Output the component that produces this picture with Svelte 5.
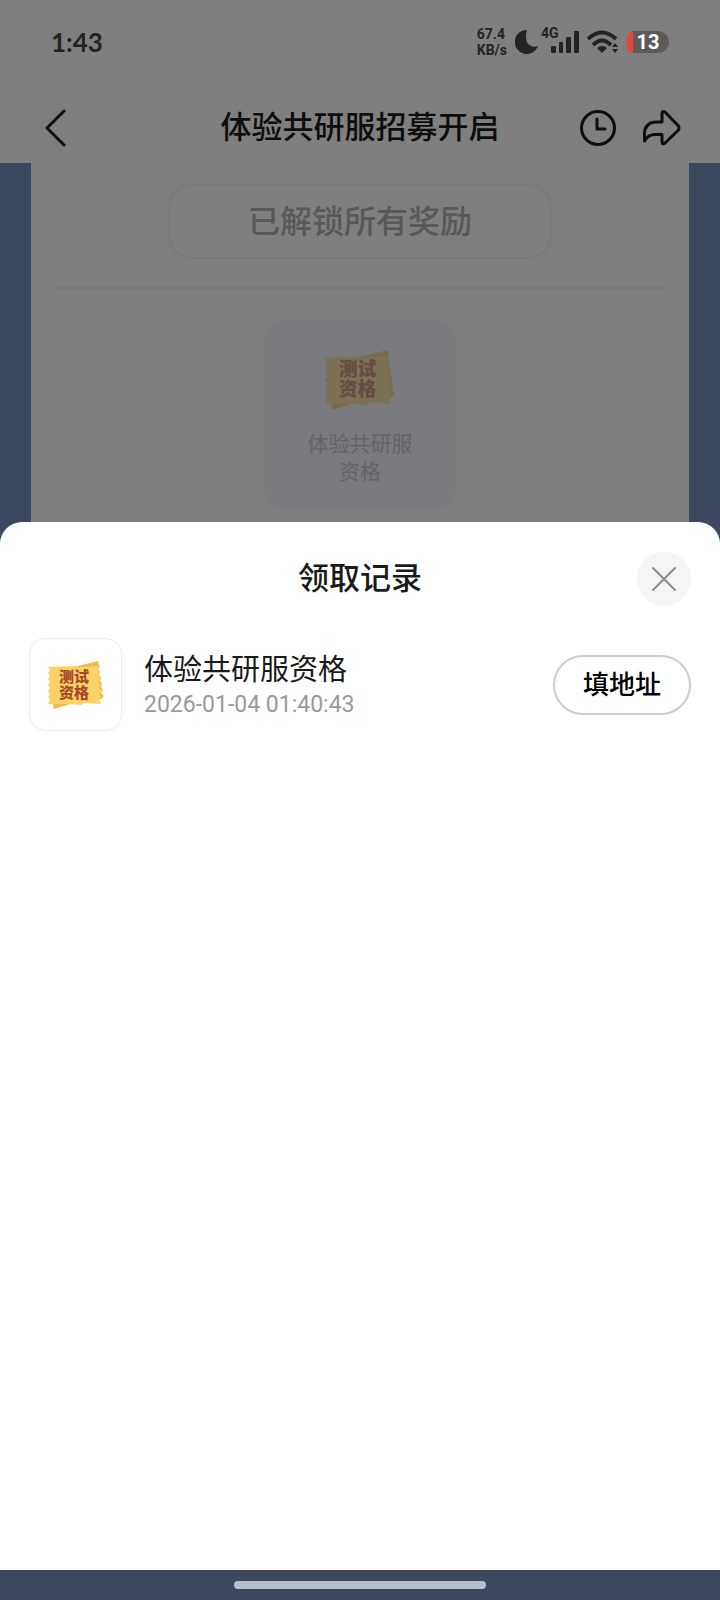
<script lang="ts">
	type RewardRecord = { id: number; name: string; time: string };

	const records: RewardRecord[] = [
		{ id: 1, name: "体验共研服资格", time: "2026-01-04 01:40:43" },
	];

	let open = $state(true);
</script>

{#snippet ticket()}
	<svg class="ticket" viewBox="0 0 56 48" role="img" aria-label="测试资格">
		<path
			d="M1 10 L30 5 L50 0 L51 5 L50 8 L52 11 L51 14 L53 17 L52 20 L54 23 L53 26 L55 29 L53 32 L56 35 L53 38 L22 43 L6 48 L5 43 Z"
			fill="#f1b94b"
		/>
		<path
			d="M0 6 L28 5 L30 6 L52 5 L50 9 L52 12 L50 15 L53 18 L50 21 L53 24 L51 27 L54 30 L51 33 L53 36 L51 39 L53 43 L36 42 L33 44 L20 43 L0 43 L2 39 L0 36 L2 33 L0 30 L2 27 L0 24 L2 21 L0 18 L2 15 L0 12 L2 9 Z"
			fill="#fbd266"
		/>
		<text class="ticket-text"><tspan x="11" y="21">测试</tspan><tspan x="11" y="37">资格</tspan></text>
	</svg>
{/snippet}

<div class="screen">
	<div class="status-bar">
		<span class="clock">1:43</span>
		<div class="status-icons">
			<span class="speed">67.4<br />KB/s</span>
			<svg class="moon" width="24" height="24" viewBox="0 0 24 24" aria-hidden="true">
				<path d="M12 0 A12 12 0 1 0 23 16 C16 19 8 13 12 0 Z" fill="#232323" />
			</svg>
			<div class="signal">
				<span class="network">4G</span>
				<svg width="28" height="24" viewBox="0 0 28 24" aria-hidden="true">
					<g fill="#232323">
						<rect x="0" y="16" width="5" height="7" rx="1" />
						<rect x="8" y="12" width="4" height="11" rx="1" />
						<rect x="15" y="7" width="5" height="16" rx="1" />
						<rect x="23" y="1" width="5" height="22" rx="1" />
					</g>
				</svg>
			</div>
			<svg width="32" height="24" viewBox="0 0 32 24" aria-hidden="true">
				<g fill="none" stroke="#232323" stroke-width="4">
					<path d="M1 9 Q15 -4 29 9" />
					<path d="M6 15 Q15 6 24 15" />
				</g>
				<path d="M10 18 Q15 14 20 18 L15 23 Z" fill="#232323" />
				<path d="M28 13 L31 17 H25 Z M28 23 L31 19 H25 Z" fill="#232323" />
			</svg>
			<div class="battery"><span>13</span></div>
		</div>
	</div>

	<header class="nav">
		<button class="icon-button back" aria-label="返回">
			<svg width="22" height="38" viewBox="0 0 22 38">
				<path d="M19 2 L2 19 L19 36" />
			</svg>
		</button>
		<h1>体验共研服招募开启</h1>
		<div class="nav-actions">
			<button class="icon-button" aria-label="记录">
				<svg width="38" height="38" viewBox="0 0 38 38">
					<circle cx="19" cy="19" r="16.5" />
					<path d="M18 10 V20 H26" />
				</svg>
			</button>
			<button class="icon-button" aria-label="分享">
				<svg width="38" height="38" viewBox="0 0 38 38">
					<path
						d="M19 4.5 Q19 1.5 22 3 L35 16.5 Q37 19 35 21.5 L22 34 Q19 36 19 32.5 V25.5 H12 Q5 25.5 1.5 32 V25 Q1.5 13.5 13 13 H19 Z"
					/>
				</svg>
			</button>
		</div>
	</header>

	<main class="panel">
		<button class="unlocked" disabled>已解锁所有奖励</button>
		<hr />
		<div class="prize">
			{@render ticket()}
			<p>体验共研服资格</p>
		</div>
	</main>

	{#if open}
		<div class="mask">
			<div class="sheet" role="dialog" aria-modal="true" aria-labelledby="sheet-title">
				<div class="sheet-header">
					<h2 id="sheet-title">领取记录</h2>
					<button class="close" aria-label="关闭" onclick={() => (open = false)}>
						<svg width="26" height="26" viewBox="0 0 26 26">
							<path d="M2 2 L24 24 M24 2 L2 24" />
						</svg>
					</button>
				</div>
				<ul>
					{#each records as record (record.id)}
						<li>
							<div class="thumb">{@render ticket()}</div>
							<div class="info">
								<p class="name">{record.name}</p>
								<time>{record.time}</time>
							</div>
							<button class="address">填地址</button>
						</li>
					{/each}
				</ul>
			</div>
			<div class="home-area"><span></span></div>
		</div>
	{/if}
</div>

<style>
	:global(body) {
		background: #7890bc;
	}

	.screen {
		position: relative;
		display: flex;
		flex-direction: column;
		min-height: 100vh;
		font-family: Roboto, "Noto Sans CJK SC", sans-serif;
		color: #1a1a1a;
		background: #7890bc;
	}

	h1,
	h2,
	p,
	ul {
		margin: 0;
		padding: 0;
	}

	h1,
	h2 {
		font-size: 31px;
		font-weight: 500;
	}

	button {
		padding: 0;
		border: none;
		background: none;
		font-family: inherit;
		cursor: pointer;
	}

	svg {
		display: block;
	}

	.status-bar {
		display: flex;
		align-items: center;
		justify-content: space-between;
		box-sizing: border-box;
		height: 91px;
		padding: 0 51px 8px;
		color: #232323;
		background: #fff;
	}

	/* system icons stay above the dimmed page */
	.clock,
	.status-icons {
		position: relative;
		z-index: 2;
	}

	.clock {
		font-family: Lato, sans-serif;
		font-size: 26px;
		font-weight: 700;
	}

	.status-icons {
		display: flex;
		align-items: center;
		gap: 8px;
	}

	.speed {
		font-size: 14px;
		font-weight: 700;
		line-height: 16px;
	}

	.signal {
		position: relative;
		padding-left: 4px;
	}

	.network {
		position: absolute;
		top: -5px;
		left: -6px;
		font-size: 14px;
		font-weight: 700;
		line-height: 16px;
	}

	.battery {
		width: 42px;
		height: 22px;
		border-radius: 7px 11px 11px 7px;
		background: linear-gradient(to right, #ea4435 6px, #5b5b5b 6px);
		color: #fff;
		font-size: 20px;
		font-weight: 700;
		line-height: 22px;
		text-align: center;
	}

	.nav {
		display: grid;
		grid-template-columns: 1fr auto 1fr;
		align-items: center;
		box-sizing: border-box;
		height: 72px;
		padding: 2px 39px 0;
		background: #fff;
	}

	.nav h1 {
		line-height: 40px;
	}

	.nav-actions {
		display: flex;
		justify-content: flex-end;
		gap: 26px;
	}

	.icon-button {
		justify-self: start;
	}

	.back {
		padding-left: 6px;
	}

	.icon-button svg {
		fill: none;
		stroke: #1a1a1a;
		stroke-width: 3;
		stroke-linecap: round;
		stroke-linejoin: round;
	}

	.panel {
		flex: 1;
		display: flex;
		flex-direction: column;
		align-items: center;
		margin: 0 31px;
		padding: 21px 22px;
		background: #fff;
	}

	.unlocked {
		box-sizing: border-box;
		width: 384px;
		height: 75px;
		border: 2px solid #f2f2f2;
		border-radius: 24px;
		color: #b0b0b0;
		font-size: 32px;
		font-weight: 500;
		line-height: 40px;
	}

	hr {
		width: 100%;
		margin: 28px 0 30px;
		border: none;
		border-top: 2px solid #f2f2f2;
	}

	.prize {
		display: flex;
		flex-direction: column;
		align-items: center;
		gap: 20px;
		width: 192px;
		padding: 31px 0 24px;
		border-radius: 22px;
		background: #f4f7ff;
	}

	.prize .ticket {
		width: 70px;
		opacity: 0.55;
	}

	.prize p {
		width: 110px;
		color: #c6c8cd;
		font-size: 21px;
		line-height: 28px;
		text-align: center;
	}

	.ticket-text {
		fill: #a8492b;
		font-family: "Noto Sans CJK SC", sans-serif;
		font-size: 15px;
		font-weight: 900;
	}

	.mask {
		position: absolute;
		inset: 0;
		z-index: 1;
		display: flex;
		flex-direction: column;
		justify-content: flex-end;
		background: rgba(0, 0, 0, 0.5);
	}

	.sheet {
		box-sizing: border-box;
		height: 65.5vh;
		padding: 29px;
		border-radius: 22px 22px 0 0;
		background: #fff;
	}

	.sheet-header {
		display: grid;
		grid-template-columns: 1fr auto 1fr;
		align-items: center;
		margin-bottom: 31px;
	}

	.sheet-header h2 {
		grid-column: 2;
		line-height: 56px;
	}

	.close {
		display: grid;
		place-items: center;
		justify-self: end;
		width: 54px;
		height: 54px;
		border-radius: 50%;
		background: #f5f5f5;
	}

	.close path {
		stroke: #8c8c8c;
		stroke-width: 2;
		stroke-linecap: round;
	}

	li {
		display: flex;
		align-items: center;
		gap: 22px;
	}

	.thumb {
		display: grid;
		place-items: center;
		box-sizing: border-box;
		width: 93px;
		height: 93px;
		border: 1px solid #ececec;
		border-radius: 16px;
	}

	.thumb .ticket {
		width: 56px;
	}

	.info {
		flex: 1;
	}

	.name {
		font-size: 29px;
		line-height: 40px;
	}

	time {
		display: block;
		color: #999;
		font-size: 23px;
		line-height: 30px;
	}

	.address {
		box-sizing: border-box;
		width: 138px;
		height: 60px;
		border: 2px solid #ccc;
		border-radius: 30px;
		color: #000;
		font-size: 26px;
		font-weight: 500;
		line-height: 40px;
	}

	.home-area {
		display: flex;
		justify-content: center;
		align-items: center;
		height: 30px;
		background: #3d485e;
	}

	.home-area span {
		width: 35%;
		height: 8px;
		border-radius: 4px;
		background: #bac0c9;
	}
</style>
